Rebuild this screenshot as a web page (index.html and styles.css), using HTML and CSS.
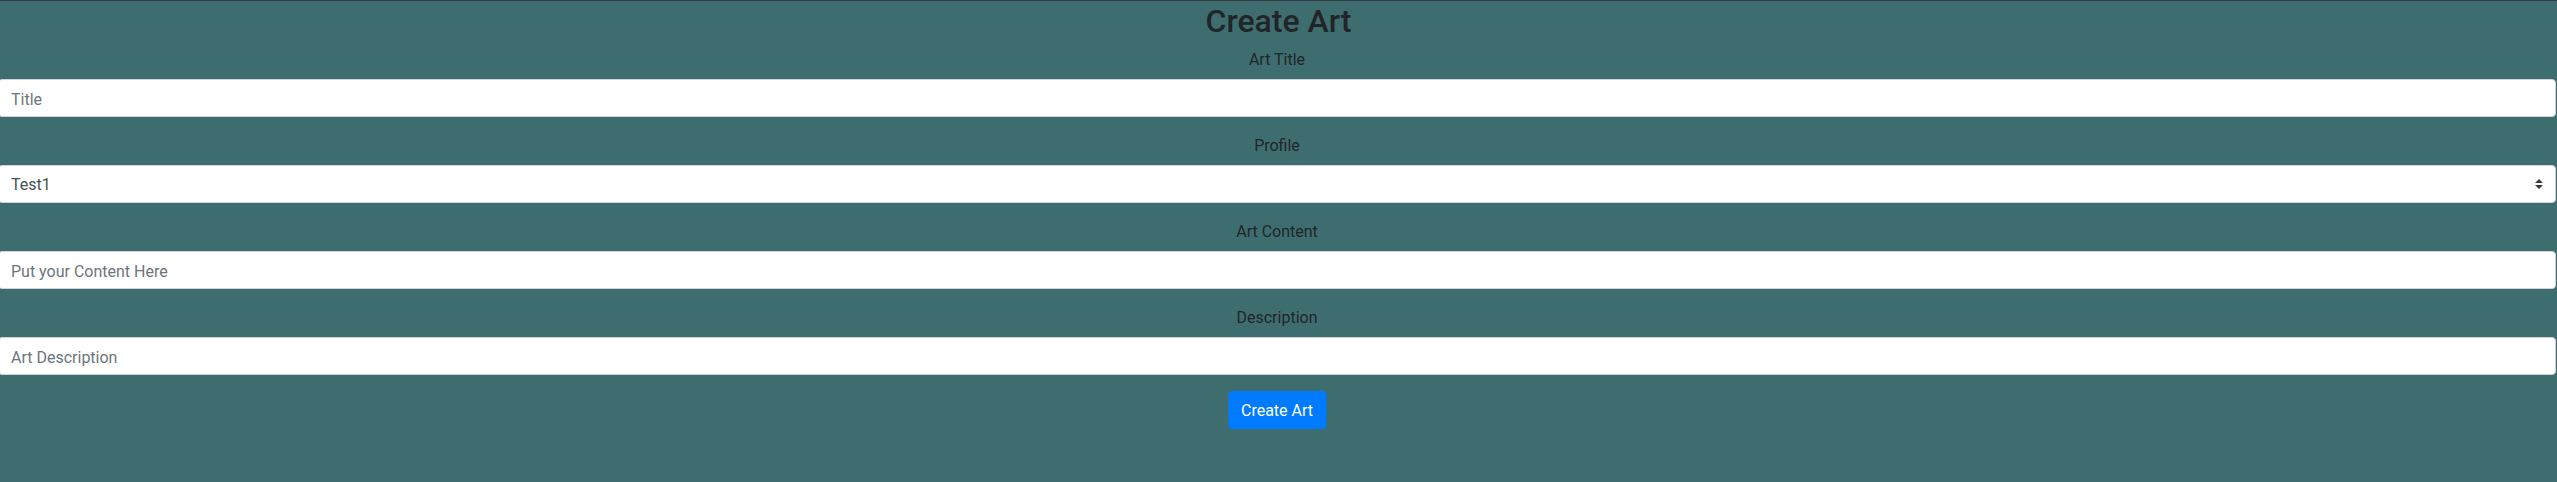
FILE: index.html
```html
<!DOCTYPE html>
<html lang="en">
<head>
<meta charset="utf-8">
<title>Create Art</title>
<link rel="stylesheet" href="styles.css">
</head>
<body>
<main class="page">
  <h2 class="page-title">Create Art</h2>
  <form class="art-form">
    <div class="form-group">
      <label class="form-label" for="title">Art Title</label>
      <input class="form-control" id="title" type="text" placeholder="Title">
    </div>
    <div class="form-group">
      <label class="form-label" for="profile">Profile</label>
      <select class="form-control custom-select" id="profile">
        <option>Test1</option>
      </select>
    </div>
    <div class="form-group">
      <label class="form-label" for="content">Art Content</label>
      <input class="form-control" id="content" type="text" placeholder="Put your Content Here">
    </div>
    <div class="form-group">
      <label class="form-label" for="description">Description</label>
      <input class="form-control" id="description" type="text" placeholder="Art Description">
    </div>
    <div class="actions">
      <button class="btn-primary" type="button">Create Art</button>
    </div>
  </form>
</main>
</body>
</html>
```
FILE: styles.css
```css
html, body {
  margin: 0;
  padding: 0;
  height: 100%;
}
body {
  background: #3e6d6f;
  border-top: 1px solid #343a40;
  box-sizing: border-box;
  font-family: Roboto, "Liberation Sans", sans-serif;
  font-size: 16px;
  line-height: 1.5;
  color: #212529;
  overflow: hidden;
}
.page {
  display: flex;
  flex-direction: column;
}
.page-title {
  margin: 0 0 7px;
  padding-top: 1px;
  font-size: 32px;
  font-weight: 500;
  line-height: 1.2;
  text-align: center;
  color: #212529;
}
.art-form {
  margin: 0 1px 0 -2px;
}
.form-group {
  margin-bottom: 16px;
  display: flex;
  flex-direction: column;
}
.form-label {
  display: block;
  text-align: center;
  margin-bottom: 7px;
  padding-top: 1px;
  line-height: 24px;
}
.form-control {
  display: block;
  box-sizing: border-box;
  width: 100%;
  height: 38px;
  padding: 7px 12px 5px;
  font-family: inherit;
  font-size: 16px;
  line-height: 1.5;
  color: #495057;
  background: #fff;
  border: 1px solid #ced4da;
  border-radius: 4px;
  outline: none;
}
.form-control::placeholder {
  color: #6c757d;
  opacity: 1;
}
.custom-select {
  appearance: none;
  -webkit-appearance: none;
  padding-right: 28px;
  background: #fff url("data:image/svg+xml,%3csvg xmlns='http://www.w3.org/2000/svg' width='4' height='5' viewBox='0 0 4 5'%3e%3cpath fill='%23343a40' d='M2 0L0 2h4zm0 5L0 3h4z'/%3e%3c/svg%3e") no-repeat right 12px center / 8px 10px;
}
.actions {
  display: flex;
  justify-content: center;
}
.btn-primary {
  font-family: inherit;
  font-size: 16px;
  line-height: 1.5;
  padding: 7px 12px 5px;
  color: #fff;
  background: #007bff;
  border: 1px solid #007bff;
  border-radius: 4px;
  cursor: pointer;
}
```
